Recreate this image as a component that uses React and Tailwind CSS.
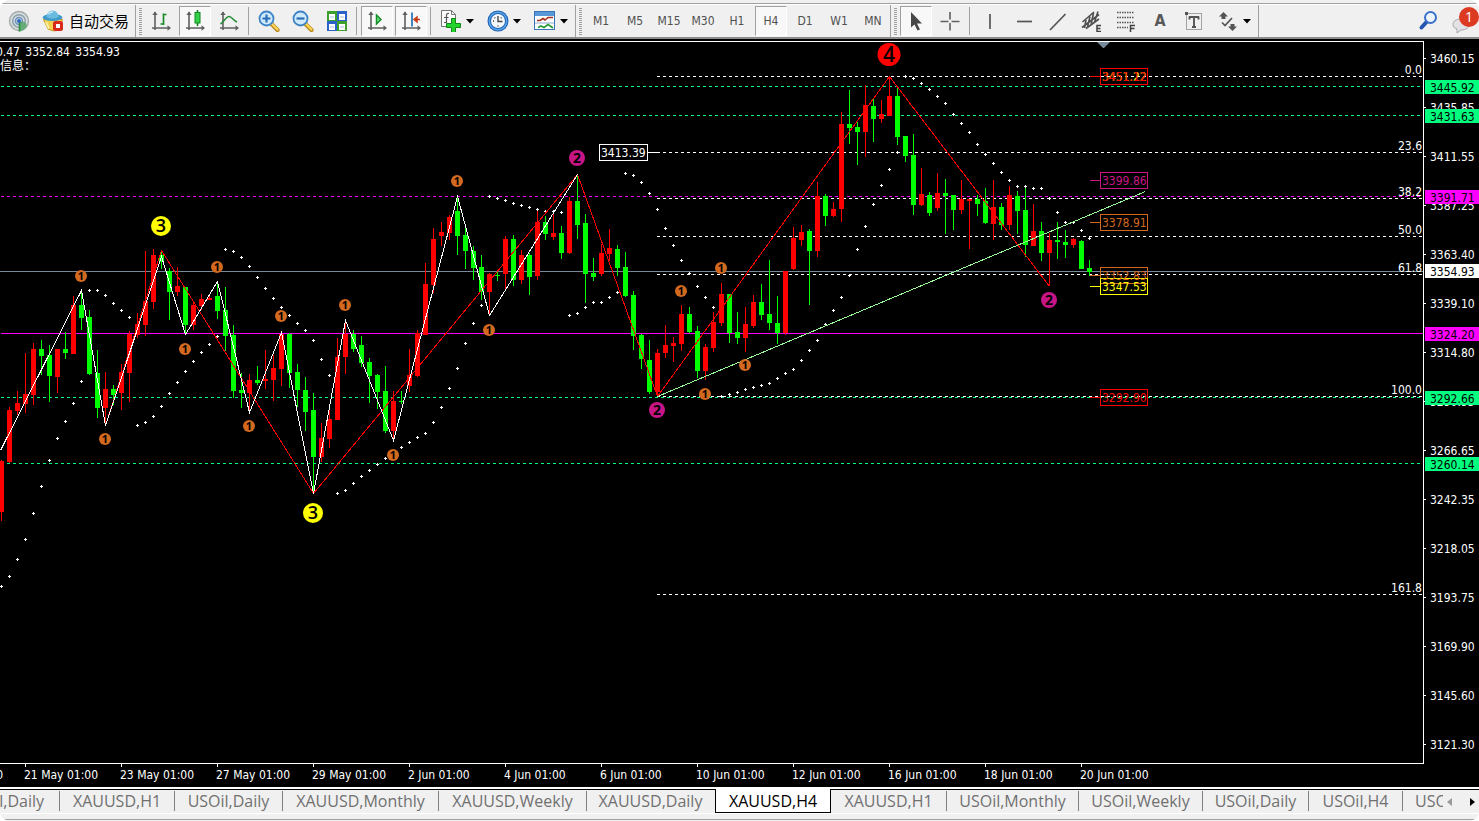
import React from "react";

/* ---------- chart data ---------- */

const FIRST_X = 1;
const STEP = 8;
const UP = "#ff0000";
const DOWN = "#00ff00";

// [direction, body top, body bottom, high, low]; one entry per bar
const CANDLES = [
  ["u", 461, 512, 460, 521], ["u", 410, 462, 407, 463], ["u", 403, 411, 391, 415], ["u", 394, 404, 353, 413],
  ["u", 349, 395, 343, 405], ["d", 349, 356, 340, 375], ["d", 355, 376, 345, 402], ["u", 349, 377, 349, 393],
  ["d", 349, 353, 332, 359], ["u", 305, 354, 296, 354], ["d", 305, 318, 292, 330], ["d", 317, 374, 310, 375],
  ["d", 373, 408, 350, 418], ["u", 389, 408, 372, 426], ["d", 389, 395, 385, 405], ["u", 372, 393, 364, 410],
  ["u", 334, 373, 331, 402], ["u", 324, 335, 313, 338], ["u", 301, 325, 251, 336], ["u", 255, 302, 249, 309],
  ["d", 255, 262, 250, 269], ["d", 271, 292, 268, 320], ["u", 286, 292, 267, 296], ["d", 287, 325, 287, 335],
  ["u", 305, 325, 303, 330], ["u", 299, 306, 294, 310], ["u", 298, 300, 296, 300], ["d", 296, 311, 284, 319],
  ["d", 310, 336, 287, 351], ["d", 335, 391, 325, 398], ["d", 390, 393, 373, 408], ["u", 380, 393, 374, 413],
  ["d", 380, 383, 366, 385], ["u", 379, 381, 350, 389], ["u", 368, 380, 355, 401], ["u", 334, 369, 332, 386],
  ["d", 334, 373, 333, 388], ["d", 372, 390, 364, 407], ["d", 390, 412, 377, 431], ["d", 410, 457, 393, 493],
  ["u", 438, 457, 423, 462], ["u", 419, 439, 409, 448], ["u", 357, 420, 338, 420], ["u", 334, 357, 320, 374],
  ["d", 334, 349, 330, 352], ["d", 345, 363, 336, 367], ["d", 362, 376, 358, 403], ["d", 375, 392, 374, 409],
  ["d", 391, 431, 366, 433], ["u", 401, 431, 391, 440], ["d", 401, 402, 391, 404], ["u", 375, 386, 349, 392],
  ["u", 333, 376, 330, 377], ["u", 284, 335, 263, 335], ["u", 239, 285, 228, 293], ["u", 232, 236, 222, 246],
  ["u", 217, 233, 215, 240], ["d", 211, 236, 197, 255], ["d", 235, 251, 228, 269], ["d", 251, 268, 246, 280],
  ["d", 267, 292, 255, 300], ["u", 274, 292, 273, 315], ["d", 275, 276, 271, 281], ["u", 239, 274, 236, 289],
  ["d", 239, 280, 235, 286], ["u", 255, 280, 250, 284], ["d", 255, 277, 253, 295], ["u", 222, 276, 210, 280],
  ["d", 222, 234, 216, 240], ["u", 233, 237, 210, 240], ["d", 233, 253, 226, 259], ["u", 201, 253, 197, 254],
  ["d", 201, 225, 175, 239], ["d", 223, 274, 214, 303], ["d", 273, 277, 258, 281], ["u", 253, 274, 244, 276],
  ["u", 248, 254, 229, 261], ["d", 249, 268, 245, 276], ["d", 267, 296, 252, 297], ["d", 295, 336, 291, 350],
  ["d", 335, 359, 334, 369], ["d", 360, 392, 340, 394], ["u", 353, 392, 349, 397], ["u", 345, 353, 325, 358],
  ["u", 343, 346, 337, 362], ["u", 314, 344, 305, 351], ["d", 314, 332, 307, 333], ["d", 331, 371, 326, 378],
  ["u", 347, 371, 344, 380], ["u", 322, 348, 312, 352], ["u", 294, 323, 283, 326], ["d", 294, 333, 294, 343],
  ["d", 332, 338, 312, 344], ["u", 324, 338, 307, 352], ["u", 302, 326, 295, 328], ["d", 302, 315, 284, 320],
  ["d", 314, 323, 260, 330], ["d", 323, 333, 296, 344], ["u", 271, 333, 271, 335], ["u", 238, 269, 227, 270],
  ["u", 232, 240, 225, 246], ["d", 231, 251, 229, 305], ["u", 196, 251, 182, 257], ["d", 196, 216, 194, 226],
  ["u", 209, 216, 202, 217], ["u", 124, 209, 112, 222], ["d", 124, 128, 90, 144], ["d", 127, 132, 122, 165],
  ["u", 105, 132, 85, 157], ["d", 106, 119, 98, 142], ["u", 114, 119, 100, 123], ["u", 96, 116, 76, 116],
  ["d", 96, 137, 87, 145], ["d", 136, 156, 136, 162], ["d", 155, 205, 134, 215], ["u", 194, 205, 168, 206],
  ["d", 195, 213, 192, 216], ["u", 193, 208, 173, 211], ["d", 193, 196, 179, 234], ["d", 195, 210, 195, 230],
  ["u", 199, 210, 180, 214], ["u", 199, 201, 199, 249], ["d", 199, 204, 195, 216], ["d", 201, 223, 188, 224],
  ["u", 207, 224, 180, 240], ["d", 207, 225, 203, 230], ["u", 195, 225, 186, 230], ["d", 196, 211, 191, 234],
  ["d", 210, 245, 187, 257], ["u", 231, 246, 204, 246], ["d", 231, 253, 222, 261], ["u", 240, 253, 233, 286],
  ["d", 240, 242, 222, 259], ["d", 242, 245, 230, 258], ["u", 239, 245, 238, 248], ["d", 241, 269, 240, 269],
  ["d", 268, 272, 260, 276],
];

// parabolic SAR, one value per bar
const SAR = [
  586, 576, 559, 539, 513, 486, 460, 438, 421, 403, 381, 290, 290, 295, 303, 310, 317, 425, 422, 416, 406, 393,
  382, 371, 361, 352, 344, 336, 249, 251, 257, 266, 277, 288, 298, 307, 315, 323, 330, 340, 359, 375, 493, 490,
  483, 476, 470, 464, 458, 453, 447, 442, 437, 433, 422, 407, 388, 368, 343, 323, 305, 196, 198, 200, 203, 205,
  207, 209, 211, 211, 212, 315, 313, 307, 302, 302, 297, 292, 173, 175, 182, 193, 209, 228, 245, 260, 273, 286,
  297, 307, 396, 394, 392, 389, 387, 385, 383, 378, 373, 369, 360, 350, 340, 324, 310, 297, 275, 249, 226, 204,
  185, 169, 152, 76, 78, 83, 89, 96, 103, 114, 123, 132, 144, 154, 163, 172, 180, 186, 186, 188, 188, 198, 212,
  222, 222, 230, 238,
];

const LEVELS = [
  { y: 86, color: "#00ff7f", dash: true, price: "3445.92", ink: "#000" },
  { y: 115, color: "#00ff7f", dash: true, price: "3431.63", ink: "#000" },
  { y: 196, color: "#ff00ff", dash: true, price: "3391.71", ink: "#000" },
  { y: 333, color: "#ff00ff", dash: false, price: "3324.20", ink: "#000" },
  { y: 397, color: "#00ff7f", dash: true, price: "3292.66", ink: "#000" },
  { y: 463, color: "#00ff7f", dash: true, price: "3260.14", ink: "#000" },
];

const FIBS = [
  [76, "0.0"], [152, "23.6"], [198, "38.2"], [236, "50.0"], [274, "61.8"], [396, "100.0"], [594, "161.8"],
];

const PRICES = [
  "3460.15", "3435.85", "3411.55", "3387.25", "3363.40", "3339.10", "3314.80", "3290.95", "3266.65", "3242.35",
  "3218.05", "3193.75", "3169.90", "3145.60", "3121.30",
];

const DATES = [
  "21 May 01:00", "23 May 01:00", "27 May 01:00", "29 May 01:00", "2 Jun 01:00", "4 Jun 01:00", "6 Jun 01:00",
  "10 Jun 01:00", "12 Jun 01:00", "16 Jun 01:00", "18 Jun 01:00", "20 Jun 01:00",
];

// last close first
const QUOTES = ["3354.93", "3352.84", "3350.47"];

const MARKS = [
  ...[
    [81, 276], [105, 439], [185, 349], [217, 267], [249, 426], [281, 316], [345, 305], [393, 455], [457, 181],
    [489, 330], [681, 291], [705, 394], [721, 268], [745, 365],
  ].map(([x, y]) => ({ x, y, n: 1, r: 6, size: 11, fill: "#d2691e" })),
  { x: 577, y: 158, n: 2, r: 8, size: 14, fill: "#c71585" },
  { x: 657, y: 410, n: 2, r: 8, size: 14, fill: "#c71585" },
  { x: 1049, y: 300, n: 2, r: 8, size: 14, fill: "#c71585" },
  { x: 161, y: 226, n: 3, r: 10, size: 18, fill: "#ffff00" },
  { x: 313, y: 513, n: 3, r: 10, size: 18, fill: "#ffff00" },
  { x: 889, y: 54.5, n: 4, r: 11.5, size: 21, fill: "#ff0000" },
];

const TAGS = [
  { y: 76, text: "3451.22", color: "#ffff00", bare: true },
  { y: 76, text: "3451.12", color: "#ff0000" },
  { y: 180, text: "3399.86", color: "#c71585" },
  { y: 222, text: "3378.91", color: "#d2691e" },
  { y: 275, text: "3352.83", color: "#d2691e" },
  { y: 286, text: "3347.53", color: "#ffff00" },
  { y: 397, text: "3292.90", color: "#ff0000" },
];

function Chart() {
  return (
    <svg
      viewBox="0 39 1479 748"
      className="block w-full bg-black font-['DejaVu_Sans_Condensed','DejaVu_Sans','Noto_Sans_CJK_SC',sans-serif] text-[12px]"
      role="img"
      aria-label="XAUUSD,H4"
    >
      <g shapeRendering="crispEdges" transform="translate(0 0.5)" fill="none">
        {LEVELS.map((l) => (
          <path key={l.y} d={`M1 ${l.y}H1423`} stroke={l.color} strokeDasharray={l.dash ? "3 3" : undefined} />
        ))}
        <path d="M0 271H1423" stroke="#778899" />
        {FIBS.map(([y]) => (
          <path key={y} d={`M657 ${y}H1423`} stroke="#fff" strokeDasharray="3 3" />
        ))}
      </g>

      <g shapeRendering="crispEdges">
        {CANDLES.map(([dir, top, bottom, high, low], i) => {
          const x = FIRST_X + i * STEP;
          const fill = dir === "u" ? UP : DOWN;
          return (
            <g key={i} fill={fill}>
              <rect x={x} y={high} width="1" height={low - high} />
              <rect x={x - 2} y={top} width="5" height={bottom - top} />
            </g>
          );
        })}
        {SAR.map((y, i) => {
          const x = FIRST_X + i * STEP;
          return <path key={i} d={`M${x - 1} ${y}h3v1h-3zM${x} ${y - 1}h1v3h-1z`} fill="#fff" />;
        })}
      </g>

      <g shapeRendering="crispEdges" transform="translate(0.5 0.5)" fill="none">
        <path d="M105 425L161 250L313 493L577 174L657 396L889 76L1049 286" stroke="#ff0000" />
        <path
          d="M0 450L81 290L105 425L161 256L185 334L217 281L249 412L281 332L313 493L345 320L393 440L457 196L489 315L577 174"
          stroke="#fff"
        />
        <path d="M657 396L1145 191" stroke="#98fb98" />
      </g>

      {MARKS.map((m) => (
        <g key={`${m.x}-${m.y}`}>
          <circle cx={m.x} cy={m.y} r={m.r} fill={m.fill} />
          <text
            x={m.x}
            y={m.y + m.size * 0.36}
            fontSize={m.size}
            fontFamily="'Open Sans', 'Noto Sans', sans-serif"
            fontWeight={m.n > 2 ? 600 : 700}
            textAnchor="middle"
            fill="#000"
          >
            {m.n}
          </text>
        </g>
      ))}

      <g shapeRendering="crispEdges" fill="none">
        <path d="M599.5 144.5h48v16h-48zM648 152.5h9" stroke="#fff" />
        {TAGS.filter((t) => !t.bare).map((t) => (
          <path key={t.text} d={`M1090 ${t.y + 0.5}h10M1100.5 ${t.y - 7.5}h47v16h-47z`} stroke={t.color} />
        ))}
      </g>
      <text x="601" y="157" fill="#fff">3413.39</text>
      {TAGS.map((t) => (
        <text key={t.text} x="1102" y={t.y + 5} fill={t.color}>
          {t.text}
        </text>
      ))}

      <g fill="#fff">
        {FIBS.map(([y, label]) => (
          <text key={y} x="1422" y={y - 2} textAnchor="end">
            {label}
          </text>
        ))}
        {QUOTES.map((q, i) => (
          <text key={q} x={120 - i * 50} y="56" textAnchor="end">
            {q}
          </text>
        ))}
        <text x="0" y="70">信息：</text>
      </g>

      <path d="M1097 42h13l-6 6h-1z" fill="#778899" />

      <g fill="#fff" shapeRendering="crispEdges">
        <rect x="0" y="41" width="1424" height="1" />
        <rect x="1423" y="41" width="1" height="723" />
        <rect x="0" y="763" width="1424" height="1" />
        {PRICES.map((p, i) => (
          <rect key={p} x="1424" y={58 + i * 49} width="2" height="1" />
        ))}
        {DATES.map((d, i) => (
          <rect key={d} x={25 + i * 96} y="764" width="1" height="3" />
        ))}
      </g>

      <g fill="#fff">
        {PRICES.map((p, i) => (
          <text key={p} x="1430" y={63 + i * 49}>
            {p}
          </text>
        ))}
        <text x="3" y="779" textAnchor="end">19 May 01:00</text>
        {DATES.map((d, i) => (
          <text key={d} x={24 + i * 96} y="779">
            {d}
          </text>
        ))}
      </g>

      {LEVELS.concat({ y: 270, color: "#ffffff", price: "3354.93", ink: "#000" }).map((l) => (
        <g key={l.price}>
          <rect x="1425" y={l.y - 6} width="54" height="14" fill={l.color} />
          <text x="1430" y={l.y + 6} fill={l.ink}>
            {l.price}
          </text>
        </g>
      ))}
    </svg>
  );
}

/* ---------- toolbar ---------- */

function Icon({ children, size = 22 }) {
  return (
    <svg width={size} height={size} viewBox={`0 0 ${size} ${size}`} fill="none" className="block shrink-0">
      {children}
    </svg>
  );
}

function Tool({ label, pressed = false, children }) {
  const look = pressed
    ? "border-t-[#a0a0a0] border-l-[#a0a0a0] border-r-white border-b-white bg-[#f8f8f8]"
    : "border-transparent";
  return (
    <button
      type="button"
      aria-label={label}
      aria-pressed={pressed}
      className={`flex h-[30px] w-8 shrink-0 items-center justify-center border ${look}`}
    >
      {children}
    </button>
  );
}

function MenuTool({ label, children }) {
  return (
    <button
      type="button"
      aria-label={label}
      aria-haspopup="menu"
      className="flex h-[30px] w-[45px] shrink-0 items-center gap-1 pl-[5px]"
    >
      {children}
      <svg width="8" height="5" viewBox="0 0 8 5" className="shrink-0">
        <path d="M0 0h8L4 4.5z" fill="#000" />
      </svg>
    </button>
  );
}

function Group({ children, grip = true }) {
  return (
    <div className="flex h-[33px] shrink-0 items-center gap-[2px] border-r border-[#a0a0a0] pr-px">
      {grip && (
        <span className="mr-px ml-[3px] h-[27px] w-[3px] bg-[repeating-linear-gradient(to_bottom,#a0a0a0_0_1px,transparent_1px_2px)]" />
      )}
      {children}
    </div>
  );
}

function Separator() {
  return <span className="mr-[2px] ml-px h-7 w-px shrink-0 bg-[#a0a0a0]" />;
}

function Axes() {
  return (
    <>
      <path d="M5 2v18M2 18h18" stroke="#606060" strokeWidth="1.6" />
      <path d="M2.300 5L5 1.500 7.700 5zM17.500 15.300L21 18l-3.500 2.700z" fill="#606060" />
    </>
  );
}

function Lens({ plus }) {
  return (
    <Icon>
      <path d="M13.500 14l6 6" stroke="#b98a1c" strokeWidth="4.200" strokeLinecap="round" />
      <path d="M14 14l5.500 5.500" stroke="#ffd95a" strokeWidth="2" strokeLinecap="round" />
      <circle cx="8.500" cy="8.500" r="7" fill="#cfeafb" stroke="#3f84c6" strokeWidth="1.800" />
      <path d={plus ? "M4.500 8.500h8M8.500 4.500v8" : "M4.500 8.500h8"} stroke="#2a6fb4" strokeWidth="2.200" />
    </Icon>
  );
}

const PERIODS = ["M1", "M5", "M15", "M30", "H1", "H4", "D1", "W1", "MN"];

function Toolbar() {
  return (
    <header className="bg-[#f0f0f0]">
      <div className="h-[4px] border-b border-[#a0a0a0]" />
      <div className="flex h-[35px] items-center overflow-hidden border-t border-b-2 border-t-white border-b-[#8c8c8c]">
        <Group grip={false}>
          <button type="button" aria-label="信号" className="ml-[3px] flex h-[30px] w-8 items-center justify-center">
            <Icon>
              <circle cx="11" cy="11" r="9.500" fill="#d8dcdc" stroke="#a3abab" strokeWidth="1.400" />
              <circle cx="11" cy="11" r="6.300" stroke="#8ba1ad" strokeWidth="1.500" />
              <circle cx="11" cy="11" r="3.500" stroke="#6b90c0" strokeWidth="1.500" />
              <path d="M11 11v10.500a10 10 0 0 0 7.500-4.500q1-3-2-5z" fill="#58a868" opacity="0.85" />
              <path d="M11.500 11v10.500" stroke="#2f8e42" strokeWidth="1.600" />
              <circle cx="11" cy="11" r="2" fill="#2f69c4" />
            </Icon>
          </button>
          <button
            type="button"
            className="flex h-[30px] w-[97px] items-center gap-[5px] pl-[5px] font-['Noto_Sans_CJK_SC',sans-serif] text-[15px] leading-5 whitespace-nowrap text-black"
          >
            <Icon>
              <path d="M1.500 9.500l4.500 9.500q5 3 10 1.500l4.500-11z" fill="#f4d04e" stroke="#c79a20" />
              <path d="M4 12l3 6.500" stroke="#fff0a0" strokeWidth="2" />
              <ellipse cx="10.500" cy="7.500" rx="10" ry="3.500" fill="#3f9ac9" />
              <path d="M4.500 7Q5 .5 10.500 .5T16.500 7q-6 3-12 0z" fill="#6cbce2" />
              <path d="M6.500 4Q8 1.500 11 2" stroke="#c5e9f8" strokeWidth="1.500" />
              <rect x="11" y="11" width="10" height="10" rx="2.500" fill="#d92a1c" />
              <rect x="14" y="14" width="4" height="4" fill="#fff" />
            </Icon>
            自动交易
          </button>
        </Group>

        <Group>
          <Tool label="Bar chart">
            <Icon>
              <Axes />
              <path d="M13.500 3.500v11.500M10.500 14h3M13.500 4.500h3" stroke="#198c28" strokeWidth="1.700" />
            </Icon>
          </Tool>
          <Tool label="Candlesticks" pressed>
            <Icon>
              <Axes />
              <path d="M13.500 0v16" stroke="#0e7a1c" strokeWidth="1.500" />
              <rect x="11" y="2.500" width="5" height="10.500" fill="#35d04b" stroke="#0e8a1e" />
            </Icon>
          </Tool>
          <Tool label="Line chart">
            <Icon>
              <Axes />
              <path d="M2.500 14C6 12 8 6.500 11 6.500S15.500 11 19 12" stroke="#278d38" strokeWidth="1.600" />
            </Icon>
          </Tool>
          <Separator />
          <Tool label="Zoom in"><Lens plus /></Tool>
          <Tool label="Zoom out"><Lens /></Tool>
          <Tool label="Tile windows">
            <Icon>
              <rect x="1" y="1" width="10" height="10" fill="#3d9f2c" />
              <rect x="11" y="1" width="10" height="10" fill="#2c62c8" />
              <rect x="1" y="11" width="10" height="10" fill="#2c62c8" />
              <rect x="11" y="11" width="10" height="10" fill="#3d9f2c" />
              <path d="M3 4h6v6H3zM13 4h6v6h-6zM3 14h6v6H3zM13 14h6v6h-6z" fill="#fff" />
              <path d="M4 7h4M14 7h4M4 17h4M14 17h4" stroke="#a7bfdd" />
            </Icon>
          </Tool>
          <Separator />
          <Tool label="Auto scroll" pressed>
            <Icon>
              <Axes />
              <path d="M10.500 5l4.500 4.500-4.500 4.500z" fill="#6de07c" stroke="#16902a" strokeWidth="1.500" />
            </Icon>
          </Tool>
          <Tool label="Chart shift" pressed>
            <Icon>
              <Axes />
              <path d="M12 2.500v14" stroke="#2470b4" strokeWidth="1.700" />
              <path d="M15 9.500h5M17 7l-3 2.500 3 2.500z" stroke="#c83c16" strokeWidth="1.500" fill="#c83c16" />
            </Icon>
          </Tool>
          <Separator />
          <MenuTool label="Indicators">
            <Icon>
              <path d="M1.500.5h10l4 4v12h-14z" fill="#fdfdfd" stroke="#747474" />
              <path d="M11.500.5v4h4" stroke="#747474" />
              <path d="M9 3.500q-2.500-.5-2.500 2v7M4 7.500h4.500M4 12.500h3" stroke="#555" strokeWidth="1.200" />
              <path d="M11.500 8.500h4v5h5v4h-5v5h-4v-5h-5v-4h5z" fill="#24d32c" stroke="#128818" />
            </Icon>
          </MenuTool>
          <MenuTool label="Periods">
            <Icon>
              <circle cx="11" cy="11" r="10.500" fill="#1f62b4" />
              <circle cx="11" cy="11" r="8.700" stroke="#5aa6ea" strokeWidth="1.400" />
              <circle cx="11" cy="11" r="7" fill="#f5f8fa" />
              <path d="M11 6v5.500h4.500M6 11h1M11 15.500v1M7.500 7.500l.7.7M14.500 7.500l-.7.700" stroke="#444" strokeWidth="1.400" />
            </Icon>
          </MenuTool>
          <MenuTool label="Templates">
            <Icon>
              <rect x=".5" y="1.500" width="20" height="18" fill="#fff" stroke="#3874b8" />
              <rect x="1" y="2" width="19" height="4" fill="#5898d8" />
              <path d="M1 13h19" stroke="#8caccf" />
              <path d="M3 10.500h3l3-2 2 1.500 3-2.500h5" stroke="#a7301c" strokeWidth="1.600" />
              <path d="M4 17.500l3-1.500 3 1.500 4-3 3 2 2 1.500" stroke="#2b9a36" strokeWidth="1.600" />
            </Icon>
          </MenuTool>
        </Group>

        <Group>
          {PERIODS.map((p) => (
            <Tool key={p} label={p} pressed={p === "H4"}>
              <span className="font-['DejaVu_Sans_Condensed','DejaVu_Sans',sans-serif] text-xs leading-4 text-[#505050]">
                {p}
              </span>
            </Tool>
          ))}
        </Group>

        <Group>
          <Tool label="Cursor" pressed>
            <Icon>
              <path d="M6 2v15.500l3.500-3 3 6 2.500-1-3-6h5z" fill="#484848" />
            </Icon>
          </Tool>
          <Tool label="Crosshair">
            <Icon>
              <path d="M11 2v7.500M11 13v7.500M1.500 11.500h8M12.500 11.500h8" stroke="#606060" strokeWidth="1.600" />
            </Icon>
          </Tool>
          <Separator />
          <Tool label="Vertical line">
            <Icon><path d="M11 4v15" stroke="#555" strokeWidth="1.700" /></Icon>
          </Tool>
          <Tool label="Horizontal line">
            <Icon><path d="M4 11.500h15" stroke="#555" strokeWidth="1.700" /></Icon>
          </Tool>
          <Tool label="Trendline">
            <Icon><path d="M3 20L18.500 4" stroke="#555" strokeWidth="1.700" /></Icon>
          </Tool>
          <Tool label="Equidistant channel">
            <Icon>
              <path
                d="M1.500 12L13 2M1 17.500L18 4.500M5 18.500L18 9M5 10l-1.500 8M9 6.500L6.500 17M12.500 3l-2.500 12M17 1.500l-3.500 10.500"
                stroke="#505050"
                strokeWidth="1.600"
              />
              <path d="M20 15.500h-4v6h4M16 18.500h3.500" stroke="#404040" strokeWidth="1.500" />
            </Icon>
          </Tool>
          <Tool label="Fibonacci retracement">
            <Icon>
              <path d="M2 2.500h17M2 7.500h17M2 12.500h17M2 17.500h11" stroke="#555" strokeWidth="1.400" strokeDasharray="1.500 1" />
              <path d="M15.500 22v-6.500H20M15.500 18.500h4" stroke="#404040" strokeWidth="1.500" />
            </Icon>
          </Tool>
          <Tool label="Text">
            <span className="font-['DejaVu_Sans_Condensed','DejaVu_Sans',sans-serif] text-base leading-5 font-bold text-[#585858]">
              A
            </span>
          </Tool>
          <Tool label="Text label">
            <Icon>
              <rect x="3.500" y="3.500" width="15" height="16" stroke="#555" strokeDasharray="1 1" />
              <path d="M2 2h3v3H2z" fill="#555" />
              <path d="M6 7h10M6.500 6.500v3M15.500 6.500v3M11 7v10M9 17h4" stroke="#555" strokeWidth="1.900" />
            </Icon>
          </Tool>
          <MenuTool label="Arrows">
            <Icon>
              <path d="M6.500 2l4.500 4.500H8.500v2.500h-4V6.500H2zM15.500 21L11 16.500h2.500V14h4v2.500H20z" fill="#555" />
              <path d="M5 12.500l3 3L15 8" stroke="#555" strokeWidth="1.700" />
            </Icon>
          </MenuTool>
        </Group>

        <div className="ml-auto flex shrink-0 items-center gap-3">
          <button type="button" aria-label="Search" className="flex h-[30px] items-center">
            <Icon>
              <path d="M10 11.500l-5.500 6" stroke="#2456b0" strokeWidth="4" strokeLinecap="round" />
              <circle cx="13.500" cy="7.500" r="5.500" fill="#eef4fb" stroke="#3a70cc" strokeWidth="2" />
            </Icon>
          </button>
          <button type="button" aria-label="Messages" className="relative flex h-[30px] w-[28px] items-end">
            <Icon>
              <path d="M10 5c5 0 8 2.300 8 5.500S15 16 10 16l-4 3V15c-3-1-4-2.500-4-4.500C2 7.300 5 5 10 5z" fill="#e2e2e6" stroke="#a6a6ac" />
            </Icon>
            <span className="absolute top-px right-0 flex size-5 items-center justify-center rounded-full bg-[#dd3a22] font-['Open_Sans',sans-serif] text-sm leading-5 text-white">
              1
            </span>
          </button>
        </div>
      </div>
    </header>
  );
}

/* ---------- chart tabs ---------- */

const TABS = [
  ["XAUUSD,H1", "w-[116px]"],
  ["USOil,Daily", "w-[108px]"],
  ["XAUUSD,Monthly", "w-[156px]"],
  ["XAUUSD,Weekly", "w-[148px]"],
  ["XAUUSD,Daily", "w-[128px]"],
  ["XAUUSD,H4", "w-[116px]"],
  ["XAUUSD,H1", "w-[116px]"],
  ["USOil,Monthly", "w-[132px]"],
  ["USOil,Weekly", "w-[124px]"],
  ["USOil,Daily", "w-[106px]"],
  ["USOil,H4", "w-[94px]"],
];
const ACTIVE = 5;

function ChartTabs() {
  return (
    <footer className="flex grow flex-col border-t-2 border-white bg-[#f0f0f0]">
      <div className="flex h-[25px] items-start border-b border-white font-['Open_Sans','Noto_Sans',sans-serif] text-base leading-5">
        <nav aria-label="Charts" className="flex h-6 min-w-0 grow overflow-hidden whitespace-nowrap text-[#707070]">
          <button type="button" className="flex w-[59px] shrink-0 items-start justify-end border-t border-black pt-px pr-[15px]">
            USOil,Daily
          </button>
          {TABS.map(([name, width], i) =>
            i === ACTIVE ? (
              <button
                key={i}
                type="button"
                aria-current="page"
                className={`${width} flex shrink-0 items-start justify-center border border-t-0 border-black bg-white pt-[2px] text-black`}
              >
                {name}
              </button>
            ) : (
              <button key={i} type="button" className={`${width} flex shrink-0 items-start border-t border-black pt-px`}>
                <span
                  className={`grow border-r text-center ${i === ACTIVE - 1 ? "border-transparent" : "border-[#808080]"} ${
                    i === 0 ? "border-l" : ""
                  }`}
                >
                  {name}
                </span>
              </button>
            ),
          )}
          <button type="button" className="flex min-w-0 grow items-start overflow-hidden border-t border-black pt-px pl-3">
            USOil,H1
          </button>
        </nav>
        <div className="flex h-6 w-9 shrink-0 items-center justify-between border-t border-black px-1">
          <button type="button" aria-label="Scroll left">
            <svg width="5" height="8" viewBox="0 0 5 8"><path d="M5 0v8L0 4z" fill="#9a9a9a" /></svg>
          </button>
          <button type="button" aria-label="Scroll right">
            <svg width="5" height="8" viewBox="0 0 5 8"><path d="M0 0v8l5-4z" fill="#000" /></svg>
          </button>
        </div>
      </div>
      <div className="h-[6px] border-b border-[#a0a0a0]" />
    </footer>
  );
}

export default function App() {
  return (
    <div className="flex min-h-screen flex-col overflow-hidden rounded-[10px] bg-[#f0f0f0]">
      <Toolbar />
      <main>
        <Chart />
      </main>
      <ChartTabs />
    </div>
  );
}
